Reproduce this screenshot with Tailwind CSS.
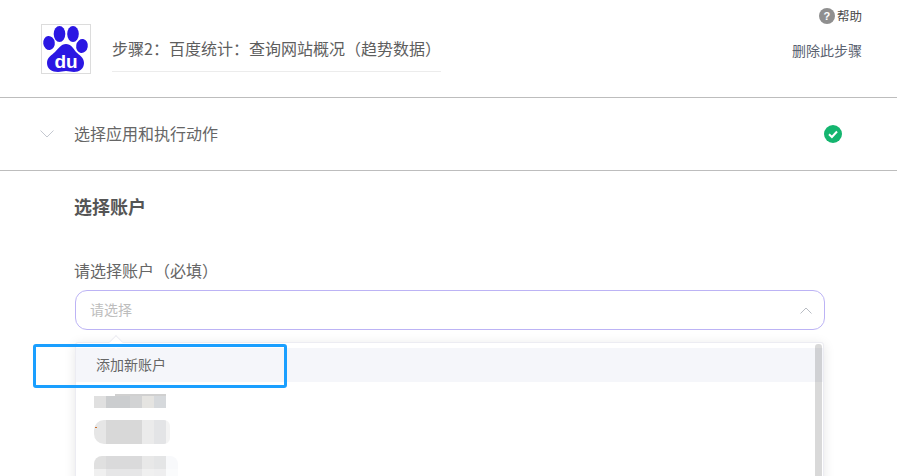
<!DOCTYPE html>
<html lang="zh">
<head>
<meta charset="utf-8">
<script src="https://cdn.jsdelivr.net/npm/@tailwindcss/browser@4"></script>
</head>
<body class="bg-white overflow-hidden font-['Noto_Sans_CJK_SC','Liberation_Sans',sans-serif] text-[#5e5e5e]">
<div class="relative w-[897px] h-[476px] overflow-hidden">
  <header class="flex h-[98px] border-b border-[#bdbdbd] pl-[41px] pr-[35px]">
    <div class="mt-6 flex items-center justify-center w-[50px] h-[50px] border border-[#dcdcdc] shrink-0">
      <svg viewBox="0 0 48 48" class="w-12 h-12">
        <ellipse cx="7" cy="18" rx="5.800" ry="7" fill="#2b17e3" transform="rotate(-8 7 18)"/>
        <ellipse cx="17.500" cy="9" rx="5.800" ry="8" fill="#2b17e3"/>
        <ellipse cx="31" cy="9" rx="5.800" ry="8" fill="#2b17e3"/>
        <ellipse cx="40" cy="21" rx="5.800" ry="7" fill="#2b17e3" transform="rotate(10 40 21)"/>
        <path d="M24 19c5 0 7 4 10 8 3 3 8 5 8 11 0 6-5 9-10 9-3 0-5-1-8-1s-5 1-8 1c-6 0-11-3-11-9 0-6 5-8 8-11 3-3 6-8 11-8z" fill="#2b17e3"/>
        <text x="24" y="43" text-anchor="middle" fill="#fff" font-size="19" font-weight="700" font-family="Liberation Sans, sans-serif">du</text>
      </svg>
    </div>
    <div class="ml-[21px] mt-[34px] w-[329px] h-[38px] border-b border-[#ececec] text-base leading-[28px] whitespace-nowrap">步骤2：百度统计：查询网站概况（趋势数据）</div>
    <div class="ml-auto flex flex-col items-end pt-[7px]">
      <div class="flex items-center gap-[2px] text-[12.500px] leading-[18px] text-[#4a4a4a]">
        <span class="flex items-center justify-center w-4 h-4 rounded-full bg-[#8f8f8f] text-white text-[11px] font-bold leading-none font-['Liberation_Sans',sans-serif]">?</span>
        <span>帮助</span>
      </div>
      <div class="mt-[15px] text-sm leading-5 text-[#5a6270]">删除此步骤</div>
    </div>
  </header>

  <section class="flex items-center h-[73px] border-b border-[#bdbdbd] pl-10 pr-[55px]">
    <svg viewBox="0 0 14 8" class="w-[14px] h-2 text-[#c4c8d0]" fill="none" stroke="currentColor" stroke-width="1"><path d="M.5.5 7 7l6.500-6.500"/></svg>
    <span class="ml-5 pb-[2px] text-base text-[#666]">选择应用和执行动作</span>
    <svg viewBox="0 0 18 18" class="ml-auto w-[18px] h-[18px]"><circle cx="9" cy="9" r="9" fill="#14b56f"/><path d="M5 9.300 7.900 12 13 6.500" fill="none" stroke="#fff" stroke-width="2"/></svg>
  </section>

  <main class="pl-[74px] pr-[72px]">
    <h2 class="mt-[22px] text-[18px] leading-[26px] font-bold text-[#555]">选择账户</h2>
    <label class="block mt-[39px] text-base leading-6 text-[#666]">请选择账户（必填）</label>
    <div class="flex items-center justify-between mt-[8px] ml-px h-10 w-[750px] rounded-xl border border-[#bcb3f5] pl-[14px] pr-[12px] text-sm text-[#bdbdbd]">
      <span class="pb-[2px]">请选择</span>
      <svg viewBox="0 0 12 7" class="w-3 h-[7px] text-[#b9bdc4]" fill="none" stroke="currentColor" stroke-width="1"><path d="M.5 6.500 6 1l5.500 5.500"/></svg>
    </div>
    <div class="relative mt-[12px] ml-px w-[749px] h-[200px] rounded-t-[3px] border border-[#ececf2] bg-white pt-[5px] shadow-[0_2px_12px_rgba(0,0,0,0.1)]">
      <div class="flex items-center h-[34px] pl-5 pb-[2px] text-sm text-[#666] bg-[#f5f6fa]">添加新账户</div>
      <div class="mt-[14px] ml-[18px]">
        <div class="relative flex w-[72px] h-[12px]">
          <div class="absolute -top-[2px] left-[21px] w-[51px] h-[2px] bg-[#8a8a8a]/40"></div>
          <div class="w-[12px] bg-[#e0e0e0]"></div><div class="w-[24px] bg-[#cbcdcf]"></div><div class="w-[12px] bg-[#d2d3d4]"></div><div class="w-[12px] bg-[#e5e4e1]"></div><div class="w-[12px] bg-[#d6d9dc]"></div>
        </div>
        <div class="mt-[12px] flex w-[76px] h-[24px] rounded-l-[10px] rounded-r-[6px] overflow-hidden">
          <div class="w-[12px] bg-[#e6e6e6]"></div><div class="w-[36px] bg-[#d8d8d8]"></div><div class="w-[12px] bg-[#ebebeb]"></div><div class="w-[12px] bg-[#e3e4e6]"></div><div class="w-[4px] bg-[#f3f3f3]"></div>
        </div>
        <div class="mt-[12px] w-[84px] rounded-t-[8px] overflow-hidden">
          <div class="flex h-[13px]">
            <div class="w-[12px] bg-[#e0e0e0]"></div><div class="w-[36px] bg-[#dadadb]"></div><div class="w-[12px] bg-[#e8e8e8]"></div><div class="w-[12px] bg-[#e4e5e6]"></div><div class="w-[12px] bg-[#f8f9fb]"></div>
          </div>
          <div class="flex h-[12px]">
            <div class="w-[12px] bg-[#f0f0f0]"></div><div class="w-[36px] bg-[#e6e6e7]"></div><div class="w-[12px] bg-[#f0f0f0]"></div><div class="w-[12px] bg-[#eeeeef]"></div><div class="w-[12px] bg-[#fafbfc]"></div>
          </div>
        </div>
      </div>
      <div class="absolute top-[1px] right-[1px] w-[7px] h-full rounded-t-[3px] bg-black/15"></div>
      <div class="absolute -top-[6px] left-[35px] w-[10px] h-[10px] rotate-45 border-l border-t border-[#ececf2] bg-white"></div>
      <div class="absolute top-[84px] left-[19px] w-[2px] h-px bg-[#c9702e]"></div>
    </div>
  </main>

  <div class="absolute left-[33px] top-[344px] w-[254px] h-[44px] rounded-[3px] border-[3px] border-[#1a9fff]"></div>
</div>
</body>
</html>
